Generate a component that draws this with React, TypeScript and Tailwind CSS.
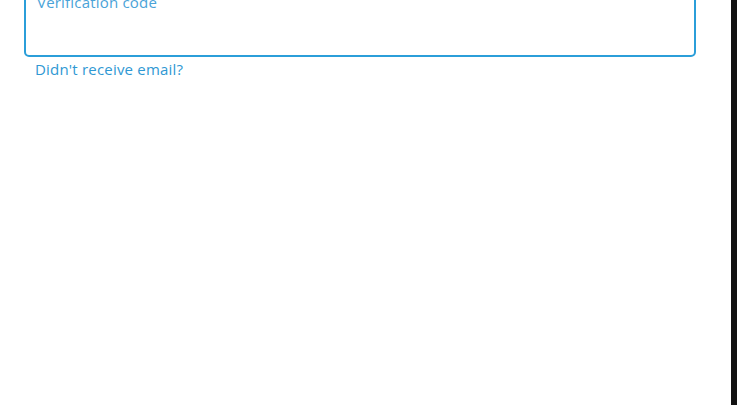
export default function App() {
    return (
        <div className="flex h-[405px] w-[737px] overflow-hidden bg-white" style={{ fontFamily: '"Open Sans", "Noto Sans", sans-serif' }}>
            <div className="flex-1 pl-6 pr-[35px]">
                <div className="-mt-[22px] h-[79px] rounded-[5px] border-2 border-[#2b9ed9] px-[11px] pt-[10px]">
                    <span className="text-[15px] leading-[20px] tracking-[0.2px] text-[#4aa3d8]">Verification code</span>
                </div>
                <a className="mt-[2px] block pl-[11px] text-[15px] leading-[20px] tracking-[0.2px] text-[#2f98d3]">Didn't receive email?</a>
            </div>
            <div className="w-[6px] bg-[#111111]" />
        </div>
    );
}
